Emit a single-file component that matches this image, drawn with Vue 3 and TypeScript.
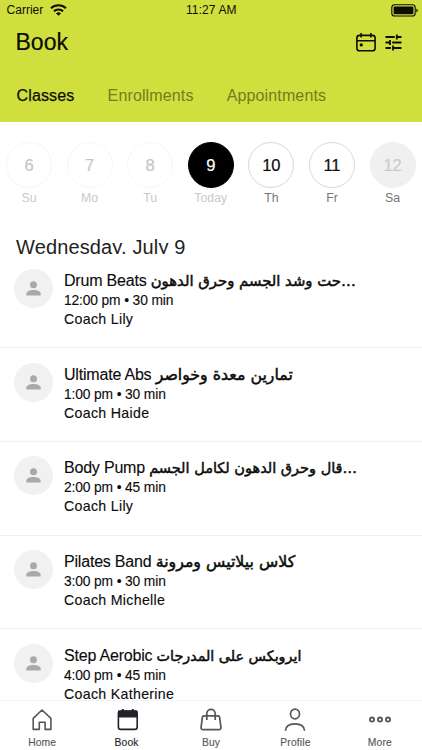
<script setup lang="ts">
interface Day { num: number; label: string; state: 'past' | 'today' | 'open' | 'off' }
interface Session { name: string; arabic: string; size: number; time: string; coach: string }

const tabs: string[] = ['Classes', 'Enrollments', 'Appointments']

const days: Day[] = [
  { num: 6, label: 'Su', state: 'past' },
  { num: 7, label: 'Mo', state: 'past' },
  { num: 8, label: 'Tu', state: 'past' },
  { num: 9, label: 'Today', state: 'today' },
  { num: 10, label: 'Th', state: 'open' },
  { num: 11, label: 'Fr', state: 'open' },
  { num: 12, label: 'Sa', state: 'off' },
]

const sessions: Session[] = [
  { name: 'Drum Beats', arabic: 'حت وشد الجسم وحرق الدهون…', size: 14.85, time: '12:00 pm • 30 min', coach: 'Coach Lily' },
  { name: 'Ultimate Abs', arabic: 'تمارين معدة وخواصر', size: 15.8, time: '1:00 pm • 30 min', coach: 'Coach Haide' },
  { name: 'Body Pump', arabic: 'قال وحرق الدهون لكامل الجسم…', size: 14.5, time: '2:00 pm • 45 min', coach: 'Coach Lily' },
  { name: 'Pilates Band', arabic: 'كلاس بيلاتيس ومرونة', size: 15.8, time: '3:00 pm • 30 min', coach: 'Coach Michelle' },
  { name: 'Step Aerobic', arabic: 'ايروبكس على المدرجات', size: 14.3, time: '4:00 pm • 45 min', coach: 'Coach Katherine' },
]
</script>

<template>
  <div class="screen">
    <header class="top">
      <div class="status">
        <div class="carrier">
          <span>Carrier</span>
          <svg width="17" height="12" viewBox="0 0 17 12" fill="none" stroke="#0c0e04" stroke-width="2">
            <path d="M1 4.3a10.8 10.8 0 0 1 15 0" />
            <path d="M3.9 7.3a6.6 6.6 0 0 1 9.2 0" />
            <path d="M8.5 11.8 6 9.4a3.6 3.6 0 0 1 5 0z" fill="#0c0e04" stroke="none" />
          </svg>
        </div>
        <span class="clock">11:27 AM</span>
        <svg class="battery" width="28" height="13" viewBox="0 0 28 13">
          <rect x="0.8" y="0.8" width="23.4" height="11.2" rx="2.8" fill="none" stroke="#0c0e04" stroke-width="1.1" />
          <rect x="2.6" y="2.6" width="19.8" height="7.6" rx="1" fill="#0c0e04" />
          <path d="M25.4 4.4c1.8.6 1.8 3.4 0 4z" fill="#0c0e04" />
        </svg>
      </div>
      <div class="titlebar">
        <h1>Book</h1>
        <div class="actions">
          <svg width="20" height="19" viewBox="0 0 20 19" fill="none" stroke="#0c0e04" stroke-width="1.6">
            <rect x="0.9" y="2.4" width="18.2" height="15.4" rx="2.6" />
            <path d="M1 7.8h18M5.1 0v4.6M14.9 0v4.6" />
            <circle cx="5.2" cy="11.9" r="1.6" fill="#0c0e04" stroke="none" />
          </svg>
          <svg width="17" height="17" viewBox="0 0 17 17" fill="none" stroke="#0c0e04" stroke-width="1.8">
            <path d="M0.5 3h9.2M11.8 0.4v5.2M11.8 3h4.7" />
            <path d="M0.5 8.5h4.3M5 5.9v5.2M7.2 8.5h9.3" />
            <path d="M0.5 14h5.4M8 11.4v5.2M8 14h8.5" />
          </svg>
        </div>
      </div>
      <nav class="tabs">
        <span v-for="(t, i) in tabs" :key="t" :class="{ active: i === 0 }">{{ t }}</span>
      </nav>
    </header>

    <section class="week">
      <div v-for="d in days" :key="d.num" class="day" :class="d.state">
        <div class="circle">{{ d.num }}</div>
        <div class="name">{{ d.label }}</div>
      </div>
    </section>

    <main class="schedule">
      <h2>Wednesday, July 9</h2>
      <article v-for="s in sessions" :key="s.time" class="row">
        <div class="avatar">
          <svg width="15" height="15" viewBox="0 0 15 15" fill="#a9a9a9">
            <circle cx="7.5" cy="3.8" r="3.5" />
            <path d="M0.3 14.5v-1.6c0-2.4 3.6-3.9 7.2-3.9s7.2 1.5 7.2 3.9v1.6z" />
          </svg>
        </div>
        <div class="info">
          <div class="title">{{ s.name }} <span class="arabic" :style="{ fontSize: s.size + 'px' }">{{ s.arabic }}</span></div>
          <div class="time">{{ s.time }}</div>
          <div class="coach">{{ s.coach }}</div>
        </div>
      </article>
    </main>

    <footer class="bar">
      <div class="item">
        <svg width="24" height="24" viewBox="0 0 24 24" fill="none" stroke="#55565c" stroke-width="1.6" stroke-linejoin="round">
          <path d="M3.2 10.4 12 2l8.9 8.4V21.4h-5.8v-7.2H9.3v7.2H3.2z" />
        </svg>
        <span>Home</span>
      </div>
      <div class="item active">
        <svg width="24" height="24" viewBox="0 0 24 24" fill="none" stroke="#222328" stroke-width="1.6">
          <rect x="3.4" y="3" width="18.8" height="18.4" rx="2.4" />
          <path d="M4 3.4h17.6v5.4H4z" fill="#222328" />
          <path d="M7.8 1v3M17.8 1v3" stroke-width="2" />
        </svg>
        <span>Book</span>
      </div>
      <div class="item">
        <svg width="24" height="24" viewBox="0 0 24 24" fill="none" stroke="#55565c" stroke-width="1.7" stroke-linejoin="round">
          <path d="M5 7.8h14q1.4 0 1.6 1.4l1.3 10q.2 2.4-2 2.4H4.1q-2.2 0-2-2.4l1.3-10Q3.6 7.8 5 7.8z" />
          <path d="M7.8 12V5.5a4.2 4.2 0 0 1 8.4 0V12" />
        </svg>
        <span>Buy</span>
      </div>
      <div class="item">
        <svg width="24" height="24" viewBox="0 0 24 24" fill="none" stroke="#55565c" stroke-width="1.7">
          <ellipse cx="12" cy="6" rx="4.5" ry="4.9" />
          <path d="M2.4 22.8c.3-4.7 3.6-7 9.6-7s9.3 2.3 9.6 7" />
        </svg>
        <span>Profile</span>
      </div>
      <div class="item">
        <svg width="24" height="24" viewBox="0 0 24 24" fill="none" stroke="#55565c" stroke-width="1.8">
          <circle cx="4" cy="11.6" r="2.1" />
          <circle cx="12" cy="11.6" r="2.1" />
          <circle cx="20" cy="11.6" r="2.1" />
        </svg>
        <span>More</span>
      </div>
    </footer>
  </div>
</template>

<style>
body {
  margin: 0;
  background: #fff;
}
</style>

<style scoped>
.screen {
  width: 422px;
  height: 750px;
  display: flex;
  flex-direction: column;
  overflow: hidden;
  background: #fff;
  color: #0c0c0c;
  font-family: 'Liberation Sans', 'DejaVu Sans', sans-serif;
}
.top {
  flex: none;
  height: 122px;
  box-sizing: border-box;
  background: #d1df3e;
  color: #0c0e04;
}
.status {
  display: grid;
  grid-template-columns: 1fr auto 1fr;
  align-items: center;
  height: 20px;
  padding: 0 3px 0 6.6px;
  font-size: 12px;
}
.carrier {
  display: flex;
  align-items: center;
  gap: 6.4px;
}
.clock {
  margin-left: -3px;
  letter-spacing: 0.1px;
}
.battery {
  justify-self: end;
}
.titlebar {
  display: flex;
  align-items: center;
  justify-content: space-between;
  height: 45px;
  padding: 0 20px 0 15.5px;
}
h1 {
  margin: 0;
  font-size: 23px;
  font-weight: 400;
  -webkit-text-stroke: 0.2px;
}
.actions {
  display: flex;
  align-items: center;
  gap: 9px;
}
.tabs {
  display: flex;
  gap: 33.2px;
  padding: 21px 0 0 16.6px;
  font-size: 16px;
  line-height: 20px;
  letter-spacing: 0.13px;
  color: #737c1e;
}
.tabs .active {
  color: #0c0e04;
  -webkit-text-stroke: 0.25px;
}
.week {
  flex: none;
  display: flex;
  padding: 19.5px 0 0 6px;
  gap: 14.6px;
}
.day {
  flex: none;
  width: 46px;
  text-align: center;
}
.circle {
  height: 46px;
  line-height: 44px;
  box-sizing: border-box;
  border: 1px solid #d9d9d9;
  border-radius: 50%;
  font-size: 16.5px;
  -webkit-text-stroke: 0.2px;
}
.name {
  margin-top: 2px;
  font-size: 12.3px;
  line-height: 17px;
  color: #757575;
}
.past .circle {
  border-color: #f6f6f6;
  color: #c6c6c6;
}
.past .name,
.today .name {
  color: #c9c9c9;
}
.today .circle {
  border-color: #000;
  background: #000;
  color: #fff;
}
.off .circle {
  border-color: #f0f0f0;
  background: #f0f0f0;
  color: #cbcbcb;
}
.schedule {
  flex: 1;
  min-height: 0;
  overflow: hidden;
  padding-top: 28px;
}
h2 {
  margin: 0 0 1px 16px;
  height: 19px;
  overflow: hidden;
  font-size: 20px;
  line-height: 25px;
  font-weight: 400;
  letter-spacing: 0.14px;
  color: #222;
}
.row {
  display: flex;
  gap: 11px;
  height: 93.7px;
  box-sizing: border-box;
  padding: 14.5px 14px 0;
  border-bottom: 1px solid #f1f1f1;
}
.avatar {
  flex: none;
  display: flex;
  align-items: center;
  justify-content: center;
  width: 39px;
  height: 39px;
  border-radius: 50%;
  background: #f1f1f1;
}
.info {
  min-width: 0;
  white-space: nowrap;
  -webkit-text-stroke: 0.12px;
}
.title {
  height: 22px;
  line-height: 23px;
  font-size: 16px;
  letter-spacing: -0.2px;
}
.arabic {
  font-family: 'DejaVu Sans', sans-serif;
  line-height: 1;
  letter-spacing: 0;
  -webkit-text-stroke: 0.5px;
}
.time {
  line-height: 19px;
  font-size: 13.8px;
  letter-spacing: -0.13px;
}
.coach {
  line-height: 18px;
  font-size: 14.2px;
  letter-spacing: 0.3px;
}
.bar {
  flex: none;
  display: flex;
  height: 50px;
  box-sizing: border-box;
  border-top: 1px solid #f3f3f3;
  background: #fff;
}
.item {
  flex: 1;
  display: flex;
  flex-direction: column;
  align-items: center;
  padding-top: 7px;
  font-size: 10.3px;
  line-height: 14px;
  letter-spacing: 0.15px;
  color: #55565c;
  -webkit-text-stroke: 0.12px;
}
.item span {
  margin-top: 4px;
}
.item.active {
  color: #222328;
}
</style>
